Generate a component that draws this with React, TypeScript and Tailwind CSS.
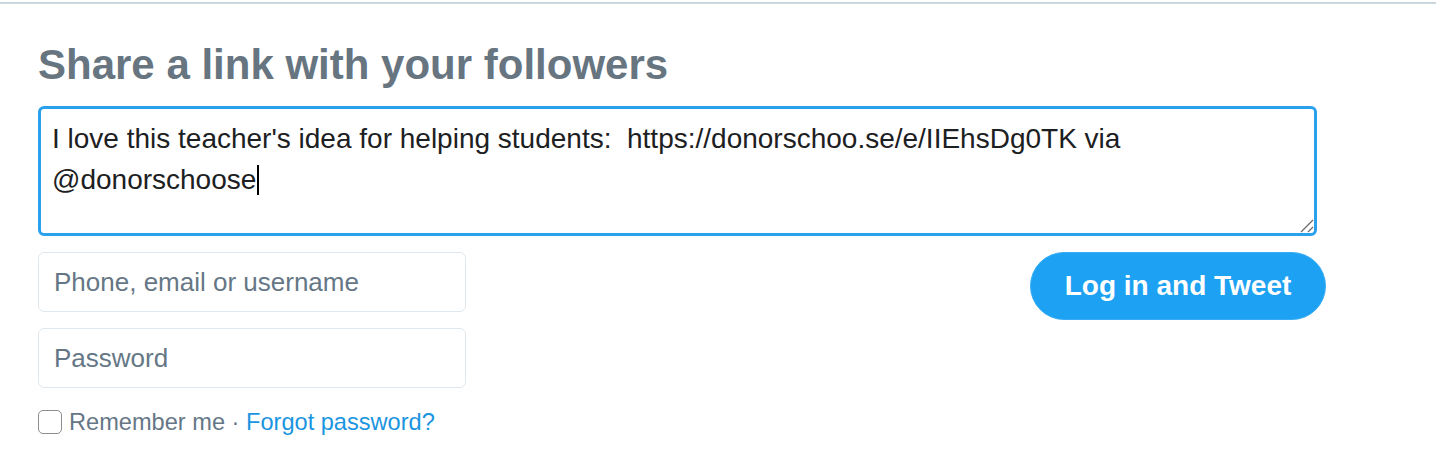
export default function App() {
  return (
    <div className="min-h-screen bg-white font-['Liberation_Sans',Arial,sans-serif]">
      <div className="h-[2px]" />
      <div className="border-t-2 border-[#ccd6dd] pl-[38px] pt-[37px]">
        <h2 className="text-[42px] leading-[48px] font-bold text-[#66757f]">
          Share a link with your followers
        </h2>

        {/* tweet box */}
        <div className="relative mt-[17px] h-[130px] w-[1279px] rounded-[6px] border-[3px] border-[#2aa1ec] pl-[11px] pr-[12px] pt-[10px] text-[28px] leading-[40px] text-[#1c2022]">
          I love this teacher's idea for helping students:&nbsp; https://donorschoo.se/e/IIEhsDg0TK via
          @donorschoose<span className="ml-[1px] inline-block h-[30px] w-[2px] translate-y-[6px] bg-black" />
          <svg
            className="absolute bottom-0 right-0"
            width="16"
            height="16"
            viewBox="0 0 16 16"
          >
            <line x1="3" y1="15" x2="15" y2="3" stroke="#6b6b6b" strokeWidth="1.2" />
            <line x1="10" y1="15" x2="15" y2="10" stroke="#6b6b6b" strokeWidth="1.2" />
          </svg>
        </div>

        <div className="mt-[16px] flex w-[1288px] items-start justify-between">
          <div className="flex flex-col">
            <div className="flex h-[60px] w-[428px] items-center rounded-[6px] border border-[#e1e8ed] pl-[15px] text-[26px] text-[#657786]">
              Phone, email or username
            </div>
            <div className="mt-[16px] flex h-[60px] w-[428px] items-center rounded-[6px] border border-[#e1e8ed] pl-[15px] text-[26px] text-[#657786]">
              Password
            </div>
            <div className="mt-[22px] flex items-center text-[23.6px] leading-[24px] text-[#657786]">
              <span className="inline-block h-[24px] w-[24px] rounded-[5px] border-[1.5px] border-[#8d8d8d] bg-white" />
              <span className="ml-[7px]">Remember me ·&nbsp;</span>
              <span className="text-[#1b95e0]">Forgot password?</span>
            </div>
          </div>

          <button className="flex h-[68px] w-[296px] items-center justify-center rounded-full border border-[#3aaef4] bg-[#1da1f2] text-[28px] font-bold text-white">
            Log in and Tweet
          </button>
        </div>
      </div>
    </div>
  );
}
